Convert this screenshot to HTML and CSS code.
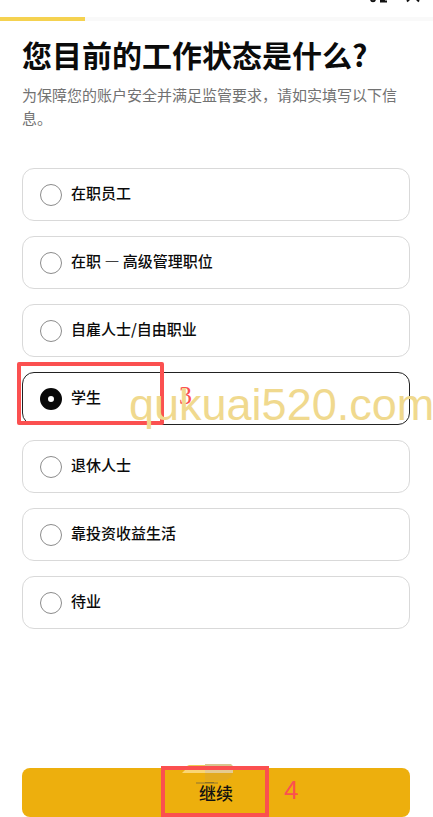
FILE: index.html
```html
<!DOCTYPE html>
<html lang="zh-CN">
<head>
    <meta charset="UTF-8">
    <meta name="viewport" content="width=device-width, initial-scale=1.0">
    <title>工作状态</title>
    <link rel="stylesheet" href="styles.css">
</head>
<body>

    <header class="topbar">
        <svg class="topbar-icon" width="20" height="4" viewBox="0 0 20 4" aria-hidden="true">
            <path d="M2 -1q0 2.200 2 2.200t2-2.200M15 0v1.500M11 0h3M11 1.500h7M17 -1v1" />
        </svg>
        <svg class="topbar-icon" width="14" height="4" viewBox="0 0 14 4" aria-hidden="true">
            <path d="M4 -1.500L1 1.500M10 -1.500l3 3" />
        </svg>
    </header>

    <!-- 进度条 -->
    <div class="progress"><div class="progress-bar"></div></div>

    <form class="page">
        <h1>您目前的工作状态是什么?</h1>
        <p class="desc">为保障您的账户安全并满足监管要求，请如实填写以下信息。</p>

        <div class="options">
            <label class="option"><input type="radio" name="status"><span>在职员工</span></label>
            <label class="option"><input type="radio" name="status"><span>在职 — 高级管理职位</span></label>
            <label class="option"><input type="radio" name="status"><span>自雇人士/自由职业</span></label>
            <div class="step">
                <label class="option"><input type="radio" name="status" checked><span>学生</span></label>
                <div class="mark mark-option"></div>
                <span class="number number-option">3</span>
                <span class="watermark">qukuai520.com</span>
            </div>
            <label class="option"><input type="radio" name="status"><span>退休人士</span></label>
            <label class="option"><input type="radio" name="status"><span>靠投资收益生活</span></label>
            <label class="option"><input type="radio" name="status"><span>待业</span></label>
        </div>

        <div class="step step-submit">
            <button type="button" class="submit">继续</button>
            <div class="mark mark-submit"></div>
            <svg class="smudge" width="54" height="26" viewBox="0 0 54 26" aria-hidden="true">
                <path fill="#edcb55" d="M7 1h17v1H5z" />
                <path fill="#d8c58e" d="M23 0h26l2 2H23z" />
                <path fill="#fad674" d="M3 6h20v3H0z" />
                <path fill="#e5cb91" d="M23 6h28v3H23z" />
                <path fill="#e3aa20" d="M23 9h28q-3 8-12 8H23z" />
                <path fill="#bd9120" d="M14 18h22v2H14z" />
                <path fill="#8c7124" d="M23 18h9v1h-9z" />
            </svg>
            <span class="number number-submit">4</span>
        </div>
    </form>

</body>
</html>
```

FILE: styles.css
```css
* {
    box-sizing: border-box;
}

body {
    font-family: "Liberation Sans", "Noto Sans CJK SC", sans-serif;
    background-color: #fff;
    color: #0b0b0b;
    margin: 0;
    min-height: 100vh;
    display: flex;
    flex-direction: column;
}

.topbar {
    height: 17px;
    padding: 0 13px;
    display: flex;
    justify-content: flex-end;
    gap: 17px;
}

.topbar-icon {
    fill: none;
    stroke: #111;
    stroke-width: 2;
}

.progress {
    height: 4px;
    background-color: #f9f9f9;
}

.progress-bar {
    width: 85px;
    height: 4px;
    background-color: #f5d250;
}

.page {
    flex: 1;
    display: flex;
    flex-direction: column;
    padding: 12px 23px 0 22px;
}

h1 {
    font-family: "Noto Sans CJK SC", sans-serif;
    font-size: 30px;
    line-height: 42px;
    font-weight: bold;
    margin: 0 0 8px;
    white-space: nowrap;
}

.desc {
    font-family: "Noto Sans CJK SC", sans-serif;
    font-size: 15px;
    line-height: 23px;
    color: #727272;
    margin: 0 0 39px;
}

.options {
    display: flex;
    flex-direction: column;
    gap: 15px;
}

.option {
    display: flex;
    align-items: center;
    gap: 9px;
    height: 53px;
    padding: 0 17px;
    border: 1px solid #d9d9d9;
    border-radius: 12px;
    font-family: "Noto Sans CJK SC", sans-serif;
    font-size: 15px;
    line-height: 22px;
    font-weight: 500;
    cursor: pointer;
}

.option:has(input:checked) {
    border-color: #222;
}

.option span {
    padding-bottom: 3px;
}

.option input {
    appearance: none;
    width: 22px;
    height: 22px;
    margin: 0;
    border: 1px solid #8c8c8c;
    border-radius: 50%;
    background-color: #fff;
}

.option input:checked {
    border: 8px solid #080808;
}

.step {
    position: relative;
}

.step-submit {
    margin-top: auto;
}

.submit {
    display: block;
    width: 100%;
    height: 49px;
    border: none;
    border-radius: 8px;
    background-color: #edaf0d;
    color: #111;
    font-family: "Noto Sans CJK SC", sans-serif;
    font-size: 17px;
    font-weight: 500;
    cursor: pointer;
}

/* 教程标注 */
.mark {
    position: absolute;
    border: 4px solid #fb5050;
    pointer-events: none;
}

.mark-option {
    left: -5px;
    top: -10px;
    width: 147px;
    height: 63px;
    border-radius: 2px;
}

.mark-submit {
    left: 139px;
    top: -2px;
    width: 108px;
    height: 51px;
}

.number {
    position: absolute;
    color: #fb5050;
    font-size: 26px;
    line-height: 30px;
}

.number-option {
    left: 157px;
    top: 9px;
    font-family: "Liberation Serif", serif;
}

.number-submit {
    left: 262px;
    top: 7px;
}

.watermark {
    position: absolute;
    left: 107px;
    top: 8px;
    font-size: 45px;
    line-height: 50px;
    color: #f0d98e;
    white-space: nowrap;
    pointer-events: none;
}

.smudge {
    position: absolute;
    left: 160px;
    top: -4px;
    pointer-events: none;
}
```
